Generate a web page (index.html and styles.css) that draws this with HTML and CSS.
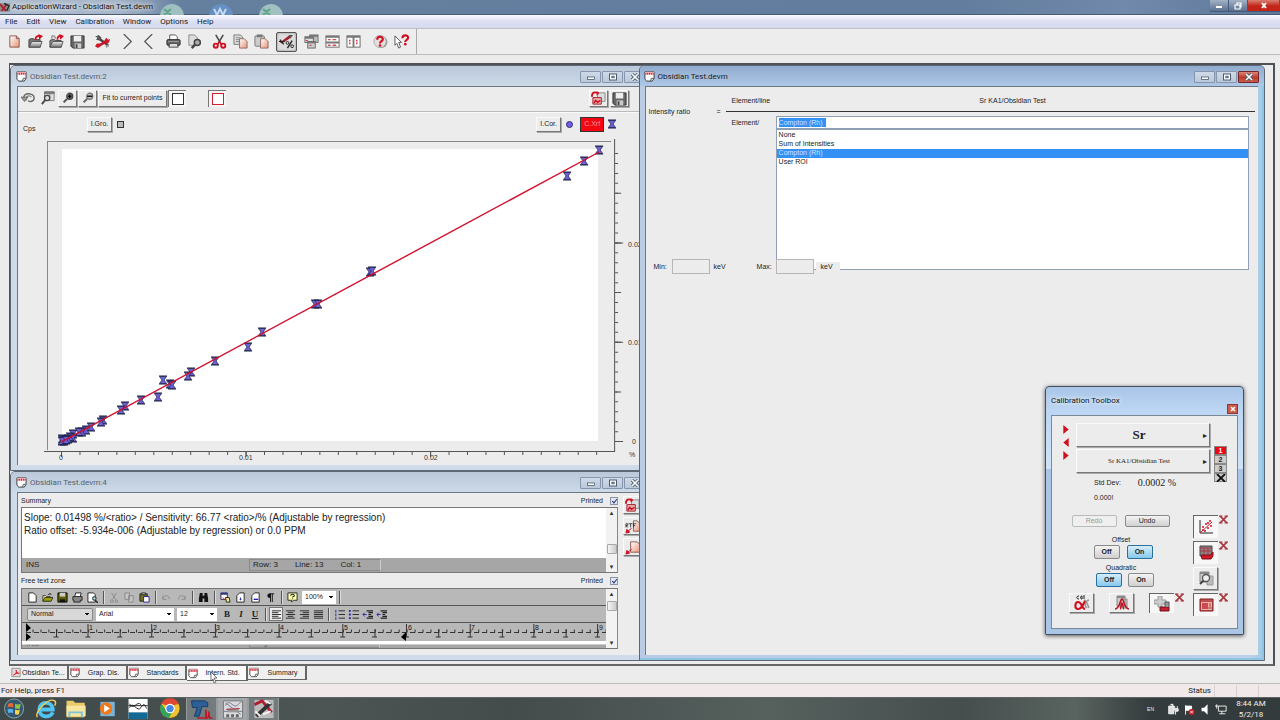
FILE: index.html
```html
<!DOCTYPE html>
<html lang="en">
<head>
<meta charset="utf-8">
<title>ApplicationWizard - Obsidian Test.devm</title>
<link rel="stylesheet" href="styles.css">
</head>
<body>
<svg class="sprite" aria-hidden="true">
  <defs>
    <linearGradient id="paper" x1="0" y1="0" x2="1" y2="1"><stop offset="0" stop-color="#fff"/><stop offset="1" stop-color="#e89478"/></linearGradient>
    <linearGradient id="steel" x1="0" y1="0" x2="0" y2="1"><stop offset="0" stop-color="#eee"/><stop offset="1" stop-color="#777"/></linearGradient>
    <symbol id="i-new" viewBox="0 0 16 16"><path d="M3 2h7l3 3v9H3z" fill="url(#paper)" stroke="#8a5b50"/><path d="M10 2v3h3" fill="none" stroke="#8a5b50"/></symbol>
    <symbol id="i-open" viewBox="0 0 16 16"><path d="M1 14V6l2-1h3l1 1h6v8z" fill="#777" stroke="#444"/><path d="M1 14l3-6h11l-2 6z" fill="url(#steel)" stroke="#555"/><path d="M8 6c0-3 2-4 4-4" fill="none" stroke="#d01020" stroke-width="2"/><path d="M11 0l5 2-4 4z" fill="#d01020"/></symbol>
    <symbol id="i-open2" viewBox="0 0 16 16"><path d="M1 14V7l2-1h3l1 1h6v7z" fill="#888" stroke="#444"/><path d="M3 5V2h3l1 3" fill="#ddd" stroke="#777"/><path d="M1 14l3-6h11l-2 6z" fill="url(#steel)" stroke="#555"/><path d="M9 6c0-2 1-4 3-4" fill="none" stroke="#d01020" stroke-width="2"/><path d="M11 0l5 2-4 4z" fill="#d01020"/></symbol>
    <symbol id="i-save" viewBox="0 0 16 16"><path d="M1 2h14v13H3l-2-2z" fill="#666" stroke="#333"/><path d="M4 2h8v6H4z" fill="#eee"/><path d="M5 10h7v5H5z" fill="#ccc"/><path d="M6 11h2v4H6z" fill="#444"/></symbol>
    <symbol id="i-tools" viewBox="0 0 16 16"><path d="M3 4l11 8" stroke="#444" stroke-width="2.400"/><path d="M0 3l4-2 3 3-2 3-4-1 2-2z" fill="#555"/><path d="M3 13l9-5" stroke="#c01828" stroke-width="2.800"/><path d="M0 13l2-3 3 0 1 3-3 2zM10 7l2-3 2 2 2-1-1 4-3 1z" fill="#d01828"/><path d="M11 12l4-1v2l-3 2z" fill="#999"/></symbol>
    <symbol id="i-next" viewBox="0 0 16 16"><path d="M4 0l8 8-8 8" fill="none" stroke="#555" stroke-width="1.300"/></symbol>
    <symbol id="i-prev" viewBox="0 0 16 16"><path d="M12 0L4 8l8 8" fill="none" stroke="#555" stroke-width="1.300"/></symbol>
    <symbol id="i-print" viewBox="0 0 16 16"><path d="M4 6V1h6l2 2v3" fill="#fff" stroke="#555"/><rect x="1" y="6" width="14" height="6" rx="1" fill="#666" stroke="#222"/><path d="M4 10h8l1 4H3z" fill="#ddd" stroke="#444"/><path d="M2 8h12" stroke="#999"/></symbol>
    <symbol id="i-preview" viewBox="0 0 16 16"><path d="M2 1h6l3 3v8H2z" fill="#ddd" stroke="#888"/><circle cx="11" cy="9" r="3.200" fill="#aaa" stroke="#444" stroke-width="1.600"/><path d="M9 11l-4 4" stroke="#444" stroke-width="2.600"/></symbol>
    <symbol id="i-cut" viewBox="0 0 16 16"><path d="M4 1l6 10M12 1L6 11" stroke="#444" stroke-width="1.600"/><circle cx="4" cy="12.500" r="2.200" fill="none" stroke="#d01020" stroke-width="2"/><circle cx="12" cy="12.500" r="2.200" fill="none" stroke="#d01020" stroke-width="2"/><path d="M6 11l2-3 2 3" fill="none" stroke="#d01020" stroke-width="1.500"/></symbol>
    <symbol id="i-copy" viewBox="0 0 16 16"><path d="M1 1h7l2 2v8H1z" fill="#ddd" stroke="#777"/><path d="M3 4h5M3 6h5M3 8h5" stroke="#888"/><path d="M7 5h5l3 3v7H7z" fill="url(#paper)" stroke="#8a6b60"/></symbol>
    <symbol id="i-paste" viewBox="0 0 16 16"><rect x="1" y="2" width="10" height="11" rx="1" fill="#ccc" stroke="#777"/><rect x="3" y="0.500" width="6" height="3" fill="#777"/><path d="M7 5h5l3 3v7H7z" fill="url(#paper)" stroke="#8a6b60"/></symbol>
    <symbol id="i-percent" viewBox="0 0 16 16"><path d="M1 9l9-7 3 0-2 3-8 5z" fill="#a02030"/><path d="M10 1l5 0-3 4z" fill="#555"/><path d="M0 8h6M1 6l4 5" stroke="#222" stroke-width="1.300"/><path d="M14 7l-5 8" stroke="#222" stroke-width="1.500"/><circle cx="9" cy="9.500" r="1.500" fill="none" stroke="#222"/><circle cx="14" cy="13" r="1.500" fill="none" stroke="#222"/></symbol>
    <symbol id="i-cascade" viewBox="0 0 16 16"><rect x="6" y="1" width="9" height="8" fill="#bbb" stroke="#777"/><rect x="1" y="3" width="9" height="6" fill="#ddd" stroke="#666"/><path d="M1 3h9v2H1zM6 1h9v2H6z" fill="#777"/><rect x="4" y="8" width="8" height="7" fill="#ccc" stroke="#666"/><path d="M4 8h8v2H4z" fill="#777"/><path d="M6 12h2M2 7h2" stroke="#c02030"/></symbol>
    <symbol id="i-tileh" viewBox="0 0 16 16"><rect x="1" y="2" width="14" height="12" fill="#fff" stroke="#666"/><path d="M1 2h14v2H1zM1 8h14v2H1z" fill="#777"/><path d="M3 6h3M8 6h4M3 12h3M8 12h4" stroke="#d05060" stroke-width="1.500"/></symbol>
    <symbol id="i-tilev" viewBox="0 0 16 16"><rect x="1" y="2" width="14" height="12" fill="#fff" stroke="#666"/><path d="M1 2h14v2H1z" fill="#777"/><path d="M8 3v11" stroke="#777" stroke-width="2"/><path d="M4 6v6M11.500 6v6" stroke="#d03040" stroke-width="1.500" stroke-dasharray="2 1"/></symbol>
    <symbol id="i-help" viewBox="0 0 16 16"><circle cx="9" cy="8.500" r="6.500" fill="#999"/><circle cx="7.500" cy="8" r="6.500" fill="#e4dede" stroke="#aaa"/><path d="M4.500 6c0-4 6-4 6-.5C10.500 8 7.500 7.500 7.500 10" fill="none" stroke="#d01020" stroke-width="2.300"/><circle cx="7.500" cy="12.300" r="1.400" fill="#d01020"/></symbol>
    <symbol id="i-whats" viewBox="0 0 16 16"><path d="M1 2l7 7H5l2 5-2 1-2-5-2 2z" fill="#fff" stroke="#555"/><path d="M9 4.500c0-4 6-4 6-.5 0 2.500-3 2-3 4.500" fill="none" stroke="#d01020" stroke-width="2.300"/><circle cx="12" cy="10.800" r="1.400" fill="#d01020"/></symbol>
    <symbol id="i-doc" viewBox="0 0 12 12"><path d="M1 1h10v7l-2 3H3L1 9z" fill="#fff" stroke="#333"/><path d="M1 1h10v3H1z" fill="#f6b6bc"/><path d="M2 2v2M4 2v2M6 2v2M8 2v2M10 2v2" stroke="#d01020"/><path d="M7 11l1-3h3" fill="#ddd" stroke="#555"/></symbol>
    <symbol id="i-pdf" viewBox="0 0 12 12"><path d="M1 1h10v10H1z" fill="#e6dcdc" stroke="#888"/><path d="M3 9c3-1 4-3 3-6 1 3 2 4 4 4-3 0-5 0-7 2z" fill="#d02030" stroke="#d02030"/></symbol>
    <symbol id="i-undoz" viewBox="0 0 16 16"><path d="M3 8c0-7 12-6 12 0 0 4-5 5-7 3" fill="none" stroke="#666" stroke-width="1.600"/><path d="M6 11c-1-5 3-7 6-4" fill="none" stroke="#888" stroke-width="1.400"/><path d="M0 7l4 5 4-5z" fill="#999" stroke="#666"/></symbol>
    <symbol id="i-zoomwin" viewBox="0 0 16 16"><path d="M4 1h11v10H4z" fill="#ddd" stroke="#777"/><path d="M4 1h11v2H4zM10 3v8" fill="#777" stroke="#777"/><circle cx="7" cy="8" r="3" fill="#ddd" stroke="#444" stroke-width="1.400"/><path d="M5 10l-4 5" stroke="#444" stroke-width="2.200"/></symbol>
    <symbol id="i-zoomin" viewBox="0 0 16 16"><circle cx="10" cy="6" r="3.500" fill="#666" stroke="#444" stroke-width="1.300"/><path d="M7 9l-4 4" stroke="#555" stroke-width="2.400"/><path d="M8 6h4M10 4v4" stroke="#000" stroke-width="1.300"/></symbol>
    <symbol id="i-zoomout" viewBox="0 0 16 16"><circle cx="10" cy="6" r="3.500" fill="#bbb" stroke="#777" stroke-width="1.300"/><path d="M7 9l-4 4" stroke="#666" stroke-width="2.400"/><path d="M7 6h6" stroke="#111" stroke-width="1.600"/></symbol>
    <symbol id="i-export" viewBox="0 0 16 16"><path d="M7 2h8v9H7z" fill="#ddd" stroke="#888"/><path d="M2 7h9v7H2z" fill="#eea8a8" stroke="#a02030"/><path d="M3 13l2-3 2 2 3-2" fill="none" stroke="#d01020" stroke-width="1.600"/><path d="M1 6c0-5 3-5 6-4" fill="none" stroke="#d01020" stroke-width="2"/><path d="M6 0l3 2-3 3z" fill="#d01020"/></symbol>
    <symbol id="i-rtf" viewBox="0 0 16 16"><path d="M9 2h4l3 3v8H9z" fill="url(#paper)" stroke="#8a5b50"/><path d="M1 9V5h2v2H1l2 2M4 5h4M6 5v4M9 9V5h3M9 7h2" fill="none" stroke="#222" stroke-width=".8"/><path d="M1 15l1-4 3 3zM3 13l4-3" fill="#d01020" stroke="#d01020"/></symbol>
    <symbol id="i-docout" viewBox="0 0 16 16"><path d="M6 2h7l3 3v8H6z" fill="url(#paper)" stroke="#8a5b50"/><path d="M1 15l1-4 3 3zM3 13l4-3" fill="#d01020" stroke="#d01020"/></symbol>
    <g id="point"><path d="M-3.500-3.500h7L1 0l2.500 3.500h-7L-1 0z" fill="#7060d8" stroke="#242a5c" stroke-width=".8"/><path d="M-4-4h8M-4 4h8" stroke="#1d2348"/></g>
    <symbol id="e-new" viewBox="0 0 12 12"><path d="M2 1h5l3 3v7H2z" fill="#fff" stroke="#222"/></symbol>
    <symbol id="e-open" viewBox="0 0 12 12"><path d="M1 10V4h3l1 1h4v5z" fill="#ffff80" stroke="#333"/><path d="M1 10l2-4h9l-2 4z" fill="#a0a000" stroke="#333"/><path d="M7 3c1-2 3-1 3 0" fill="none" stroke="#000"/></symbol>
    <symbol id="e-save" viewBox="0 0 12 12"><path d="M1 1h10v10H1z" fill="#606000" stroke="#000"/><path d="M3 1h6v4H3z" fill="#ccc"/><path d="M3 8h6v3H3z" fill="#111"/></symbol>
    <symbol id="e-print" viewBox="0 0 12 12"><path d="M3 5l1-4h6L9 5" fill="#fff" stroke="#222"/><path d="M1 5h10v4H9v2H2V9H1z" fill="#888" stroke="#222"/></symbol>
    <symbol id="e-view" viewBox="0 0 12 12"><path d="M1 1h6l2 2v8H1z" fill="#fff" stroke="#222"/><circle cx="8" cy="7" r="2" fill="#9cc" stroke="#222"/><path d="M9 9l3 3" stroke="#222" stroke-width="1.500"/></symbol>
    <symbol id="e-cut" viewBox="0 0 12 12"><path d="M3 1l4 7M8 1L4 8" stroke="#888"/><circle cx="3" cy="10" r="1.500" fill="none" stroke="#888"/><circle cx="8" cy="10" r="1.500" fill="none" stroke="#888"/></symbol>
    <symbol id="e-copy" viewBox="0 0 12 12"><path d="M1 1h5v7H1zM5 4h5v7H5z" fill="#c4c4c4" stroke="#8a8a8a"/></symbol>
    <symbol id="e-paste" viewBox="0 0 12 12"><path d="M1 2h8v8H1z" fill="#707020" stroke="#222"/><path d="M3 1h4v2H3z" fill="#ddd" stroke="#222"/><path d="M5 5h6v6H5z" fill="#fff" stroke="#228"/></symbol>
    <symbol id="e-undo" viewBox="0 0 12 12"><path d="M2 4v4h4M2 7c2-5 8-3 7 1" fill="none" stroke="#888"/></symbol>
    <symbol id="e-redo" viewBox="0 0 12 12"><path d="M10 4v4H6M10 7C8 2 2 4 3 8" fill="none" stroke="#888"/></symbol>
    <symbol id="e-find" viewBox="0 0 12 12"><path d="M2 1h3v3h2V1h3l1 6v4H7V7H5v4H1V7z" fill="#111"/></symbol>
    <symbol id="e-field" viewBox="0 0 12 12"><path d="M1 1h7v7H1z" fill="#fff" stroke="#226"/><path d="M1 1h7v2H1z" fill="#338"/><path d="M6 6h4l1 5H7z" fill="#ee8" stroke="#222"/><path d="M3 6l3 3" stroke="#c22"/></symbol>
    <symbol id="e-page" viewBox="0 0 12 12"><path d="M5 1h5v10H2V4z" fill="#fff" stroke="#222"/><path d="M6 6v3M5 8h2" stroke="#22a"/></symbol>
    <symbol id="e-page2" viewBox="0 0 12 12"><path d="M5 1h5v10H2V4z" fill="#fff" stroke="#222"/><path d="M4 8h5" stroke="#22a" stroke-width="1.500"/></symbol>
    <symbol id="e-para" viewBox="0 0 12 12"><path d="M10 2H5a2 2 0 0 0 0 4h1V2M6 2v9M8 2v9" fill="#111" stroke="#111"/></symbol>
    <symbol id="e-help" viewBox="0 0 12 12"><path d="M1 1h10v8H7l-2 2V9H1z" fill="#ffa" stroke="#222"/><path d="M4 4c0-2 4-2 4 0 0 1-2 1-2 2M6 7v1" fill="none" stroke="#222" stroke-width="1.200"/></symbol>
    <symbol id="e-al" viewBox="0 0 12 12"><path d="M1 2h10M1 4h7M1 6h10M1 8h7M1 10h10" stroke="#222"/></symbol>
    <symbol id="e-ac" viewBox="0 0 12 12"><path d="M1 2h10M3 4h6M1 6h10M3 8h6M1 10h10" stroke="#222"/></symbol>
    <symbol id="e-ar" viewBox="0 0 12 12"><path d="M1 2h10M4 4h7M1 6h10M4 8h7M1 10h10" stroke="#222"/></symbol>
    <symbol id="e-aj" viewBox="0 0 12 12"><path d="M1 2h10M1 4h10M1 6h10M1 8h10M1 10h10" stroke="#222"/></symbol>
    <symbol id="e-num" viewBox="0 0 12 12"><path d="M5 2h7M5 6h7M5 10h7" stroke="#222"/><path d="M2 1v3M2 5v3M2 9v3" stroke="#22a"/></symbol>
    <symbol id="e-bul" viewBox="0 0 12 12"><path d="M5 2h7M5 6h7M5 10h7" stroke="#222"/><path d="M1 2h2M1 6h2M1 10h2" stroke="#22a" stroke-width="2"/></symbol>
    <symbol id="e-ind" viewBox="0 0 12 12"><path d="M5 2h7M7 4h5M7 6h3M7 8h5M5 10h7" stroke="#222" stroke-width="1.200"/><path d="M5 6H1M3 4L1 6l2 2" fill="none" stroke="#22a"/></symbol>
    <symbol id="t-scatter" viewBox="0 0 16 16"><path d="M2 1v13h13" fill="none" stroke="#222"/><path d="M2 14L14 3" stroke="#c02030"/><g fill="#d01020"><circle cx="5" cy="8" r="1"/><circle cx="8" cy="5" r="1"/><circle cx="7" cy="12" r="1"/><circle cx="10" cy="9" r="1"/><circle cx="12" cy="2" r="1"/><circle cx="13" cy="7" r="1"/><circle cx="5" cy="11" r="1"/><circle cx="10" cy="4" r="1"/></g></symbol>
    <symbol id="t-grid" viewBox="0 0 16 16"><path d="M2 1h12v10H2z" fill="#888" stroke="#444"/><path d="M2 3h12M2 6h12M6 3v8M10 3v8" stroke="#b03040"/><path d="M3 10h9l3-3v4l-2 3H4z" fill="#d01828" stroke="#801018"/></symbol>
    <symbol id="t-zoom" viewBox="0 0 16 16"><path d="M2 1h9v10H2z" fill="#ccc" stroke="#888"/><path d="M2 1h9v2H2z" fill="#888"/><path d="M9 5h6v9H9z" fill="#bbb" stroke="#999"/><circle cx="8" cy="7" r="3.500" fill="#eee" stroke="#555" stroke-width="1.300"/><path d="M5.500 9.500L2 13" stroke="#444" stroke-width="2"/></symbol>
    <symbol id="t-panel" viewBox="0 0 16 16"><path d="M2 2h13v12H2z" fill="#c05050" stroke="#802020"/><path d="M3 5h11v8H3z" fill="#eeb0a8"/><path d="M4 6h6v6H4z" fill="#d04850"/><path d="M10 11h4M12 6v4" stroke="#905050"/></symbol>
    <symbol id="t-alpha" viewBox="0 0 16 16"><path d="M15 5c-4 1-5 6-2 8M10 5c3 1 4 6 5 8" fill="none" stroke="#999" stroke-width="1.500"/><path d="M5 1C2 1 2 4 5 4M8 1C6 1 6 4 8 4V1M10 0v4" fill="none" stroke="#222"/><path d="M11 6c-2 3-3 8-7 8-4 0-3-7 0-7 4 0 4 7 7 7" fill="none" stroke="#d01020" stroke-width="2.200"/></symbol>
    <symbol id="t-peak" viewBox="0 0 16 16"><path d="M3 1h8v10H3zM7 4h6v9H7z" fill="#ccc" stroke="#888"/><path d="M3 1h8v2H3z" fill="#888"/><path d="M1 14c5 0 5-10 7-10s2 10 7 10M6 14c1 0 1-6 2-6s1 6 2 6" fill="none" stroke="#c01020" stroke-width="1.500"/></symbol>
    <symbol id="t-calc" viewBox="0 0 16 16"><path d="M4 0h4v4h4v4H8v3H4V8H0V4h4z" fill="#ccc" stroke="#999"/><path d="M6 11h9v4H6z" fill="#c82030" stroke="#701018"/><path d="M11 11V6h4v5" fill="#999" stroke="#555"/></symbol>
    <symbol id="t-x" viewBox="0 0 8 8"><path d="M1 1l6 6M7 1L1 7" stroke="#a83840" stroke-width="1.400"/><path d="M0 1h3M5 1h3M0 7h3M5 7h3" stroke="#a83840"/></symbol>
    <symbol id="w-min" viewBox="0 0 10 8"><rect x="1.500" y="4" width="7" height="2.500" fill="#fff" stroke="#4c5b6d" stroke-width=".8"/></symbol>
    <symbol id="w-max" viewBox="0 0 10 8"><rect x="1.500" y="1" width="7" height="6" fill="#fff" stroke="#4c5b6d"/><rect x="3.800" y="3.200" width="2.400" height="1.600" fill="#9ab" stroke="#4c5b6d" stroke-width=".8"/></symbol>
    <symbol id="w-x" viewBox="0 0 10 8"><path d="M2 1l6 6M8 1L2 7" stroke="#4c5b6d" stroke-width="3.200"/><path d="M2 1l6 6M8 1L2 7" stroke="#fff" stroke-width="1.600"/></symbol>
  </defs>
</svg>

<div class="app">
  <header class="caption">
    <svg class="ghosts" viewBox="0 0 140 15" aria-hidden="true"><circle cx="22" cy="16" r="12" fill="#9fbfc0"/><circle cx="71" cy="16" r="12" fill="#6590c4"/><circle cx="121" cy="16" r="12" fill="#9fc1c2"/><path d="M14 9l7 6M21 9l-7 6M113 9l7 6M120 9l-7 6" stroke="#5fa286" stroke-width="2"/><path d="M64 9l3 6 3-6 3 6 3-6" fill="none" stroke="#c5daf0" stroke-width="2"/></svg>
    <svg class="appicon" viewBox="0 0 12 12"><path d="M0 1h12v10H0z" fill="#888"/><path d="M0 2l7 8M2 10L8 2" stroke="#b01a28" stroke-width="2"/><path d="M5 1l6 3-3 6" fill="none" stroke="#222" stroke-width="1.500"/></svg>
    <span class="caption-text">ApplicationWizard - Obsidian Test.devm</span>
    <span class="caption-buttons">
      <button aria-label="Minimize"><svg viewBox="0 0 10 8"><path d="M2 5h6" stroke="#fff" stroke-width="2"/></svg></button>
      <button aria-label="Restore"><svg viewBox="0 0 10 8"><path d="M2 3h5v4H2zM4 3V1h4v4H7" fill="none" stroke="#fff" stroke-width="1.200"/></svg></button>
      <button class="red" aria-label="Close"><svg viewBox="0 0 10 8"><path d="M3 1l4 5M7 1L3 6" stroke="#fff" stroke-width="2"/></svg></button>
    </span>
  </header>
  <nav class="menubar">
    <button>File</button><button>Edit</button><button>View</button><button>Calibration</button><button>Window</button><button>Options</button><button>Help</button>
  </nav>
  <div class="toolbar">
    <div class="group">
      <button aria-label="New"><svg><use href="#i-new"/></svg></button>
      <button aria-label="Open"><svg><use href="#i-open"/></svg></button>
      <button aria-label="Open copy"><svg><use href="#i-open2"/></svg></button>
      <button aria-label="Save"><svg><use href="#i-save"/></svg></button>
    </div>
    <div class="group"><button aria-label="Tools"><svg><use href="#i-tools"/></svg></button></div>
    <div class="group">
      <button aria-label="Next"><svg><use href="#i-next"/></svg></button>
      <button aria-label="Previous"><svg><use href="#i-prev"/></svg></button>
    </div>
    <div class="group">
      <button aria-label="Print"><svg><use href="#i-print"/></svg></button>
      <button aria-label="Print preview"><svg><use href="#i-preview"/></svg></button>
    </div>
    <div class="group">
      <button aria-label="Cut"><svg><use href="#i-cut"/></svg></button>
      <button aria-label="Copy"><svg><use href="#i-copy"/></svg></button>
      <button aria-label="Paste"><svg><use href="#i-paste"/></svg></button>
    </div>
    <div class="group"><button class="pressed" aria-label="Percent"><svg><use href="#i-percent"/></svg></button></div>
    <div class="group">
      <button aria-label="Cascade"><svg><use href="#i-cascade"/></svg></button>
      <button aria-label="Tile horizontally"><svg><use href="#i-tileh"/></svg></button>
      <button aria-label="Tile vertically"><svg><use href="#i-tilev"/></svg></button>
    </div>
    <div class="group last">
      <button aria-label="Help"><svg><use href="#i-help"/></svg></button>
      <button aria-label="Context help"><svg><use href="#i-whats"/></svg></button>
    </div>
  </div>

  <main class="mdi">
    <section class="win win-graph">
      <header class="titlebar"><svg class="docicon"><use href="#i-doc"/></svg><h2>Obsidian Test.devm:2</h2>
        <button aria-label="Minimize"><svg><use href="#w-min"/></svg></button><button aria-label="Maximize"><svg><use href="#w-max"/></svg></button><button aria-label="Close"><svg><use href="#w-x"/></svg></button></header>
      <div class="win-body">
        <div class="graph-bar">
          <button class="flat" aria-label="Undo zoom"><svg><use href="#i-undoz"/></svg></button>
          <button class="flat" aria-label="Zoom window"><svg><use href="#i-zoomwin"/></svg></button>
          <button class="bevel" aria-label="Zoom in"><svg><use href="#i-zoomin"/></svg></button>
          <button class="bevel" aria-label="Zoom out"><svg><use href="#i-zoomout"/></svg></button>
          <button class="bevel fit">Fit to current points</button>
          <button class="swatch" aria-label="Black frame"><i></i></button>
          <button class="swatch red-frame" aria-label="Red frame"><i></i></button>
          <button class="bevel end" aria-label="Export"><svg><use href="#i-export"/></svg></button>
          <button class="bevel save" aria-label="Save graph"><svg><use href="#i-save"/></svg></button>
        </div>
        <div class="legend">
          <span class="cps">Cps</span>
          <button class="bevel">I.Gro.</button><i class="mark-square"></i>
          <button class="bevel cor">I.Cor.</button><i class="mark-dot"></i>
          <button class="bevel xrf">C.Xrf</button><svg class="mark-hour" viewBox="-5 -5 10 10"><use href="#point"/></svg>
        </div>
        <svg class="plot" viewBox="18 137 629 326" role="img" aria-label="Calibration curve">
          <path d="M62 149H598V441H62z" fill="#fff"/>
          <path d="M47.500 450V141.500H611" fill="none" stroke="#888"/>
          <path d="M44 451.500H614.500V139" fill="none" stroke="#555"/>
          <path d="M61 453.500H599" stroke="#555" stroke-width="3" stroke-dasharray="1 17.450"/>
          <path d="M61 454.500H440" stroke="#555" stroke-width="5" stroke-dasharray="1 183.500"/>
          <path d="M616.500 442V150" stroke="#555" stroke-width="3" stroke-dasharray="1 8.930"/>
          <path d="M618 442V190" stroke="#555" stroke-width="6" stroke-dasharray="1 48.650"/>
          <path d="M619 442V230" stroke="#555" stroke-width="8" stroke-dasharray="1 98.300"/>
          <g><text x="59" y="460">0</text><text x="239" y="460">0.01</text><text x="424" y="460">0.02</text><text x="628" y="247">0.02</text><text x="628" y="345">0.01</text><text x="632" y="444">0</text><text x="629" y="457">%</text></g>
          <g>
            <use href="#point" x="599" y="150"/><use href="#point" x="584" y="161"/><use href="#point" x="567" y="176"/><use href="#point" x="370" y="272"/><use href="#point" x="372" y="271"/><use href="#point" x="315" y="304"/><use href="#point" x="318" y="304"/><use href="#point" x="262" y="332"/><use href="#point" x="248" y="347"/><use href="#point" x="215" y="361"/><use href="#point" x="191" y="372"/><use href="#point" x="188" y="376"/><use href="#point" x="163" y="380"/><use href="#point" x="170" y="384"/><use href="#point" x="172" y="385"/><use href="#point" x="158" y="397"/><use href="#point" x="141" y="400"/><use href="#point" x="125" y="406"/><use href="#point" x="121" y="410"/><use href="#point" x="103" y="420"/><use href="#point" x="101" y="422"/><use href="#point" x="91" y="427"/><use href="#point" x="86" y="430"/><use href="#point" x="82" y="432"/><use href="#point" x="79" y="432"/><use href="#point" x="73" y="434"/><use href="#point" x="73" y="438"/><use href="#point" x="70" y="437"/><use href="#point" x="68" y="439"/><use href="#point" x="62" y="439"/><use href="#point" x="64" y="441"/><use href="#point" x="62" y="441"/><use href="#point" x="66" y="440"/>
          </g>
          <path d="M61 442L599 152" stroke="#d0102c" stroke-width="1.400"/>
        </svg>
      </div>
    </section>

    <section class="win win-text">
      <header class="titlebar"><svg class="docicon"><use href="#i-doc"/></svg><h2>Obsidian Test.devm:4</h2>
        <button aria-label="Minimize"><svg><use href="#w-min"/></svg></button><button aria-label="Maximize"><svg><use href="#w-max"/></svg></button><button aria-label="Close"><svg><use href="#w-x"/></svg></button></header>
      <div class="win-body text-body">
        <div class="zones">
          <div class="zone-head"><span>Summary</span><label>Printed <input type="checkbox" checked></label></div>
          <div class="zone summary">
            <div class="zone-main">
              <p>Slope: 0.01498 %/&lt;ratio&gt; / Sensitivity: 66.77 &lt;ratio&gt;/% (Adjustable by regression)<br>Ratio offset: -5.934e-006 (Adjustable by regression) or 0.0 PPM</p>
              <div class="zone-status"><span class="ins">INS</span><span class="pos"><span>Row: 3</span><span>Line: 13</span><span>Col: 1</span></span></div>
            </div>
            <div class="scroll low"><b>▴</b><i></i><b>▾</b></div>
          </div>
          <div class="zone-head second"><span>Free text zone</span><label>Printed <input type="checkbox" checked></label></div>
          <div class="zone editor">
            <div class="zone-main">
              <div class="ed-row">
                <button aria-label="New"><svg><use href="#e-new"/></svg></button><button aria-label="Open"><svg><use href="#e-open"/></svg></button><button aria-label="Save"><svg><use href="#e-save"/></svg></button><button aria-label="Print"><svg><use href="#e-print"/></svg></button><button aria-label="Preview"><svg><use href="#e-view"/></svg></button><hr>
                <button aria-label="Cut"><svg><use href="#e-cut"/></svg></button><button aria-label="Copy"><svg><use href="#e-copy"/></svg></button><button aria-label="Paste"><svg><use href="#e-paste"/></svg></button><hr>
                <button aria-label="Undo"><svg><use href="#e-undo"/></svg></button><button aria-label="Redo"><svg><use href="#e-redo"/></svg></button><hr>
                <button aria-label="Find"><svg><use href="#e-find"/></svg></button><hr>
                <button aria-label="Field"><svg><use href="#e-field"/></svg></button><button aria-label="Header"><svg><use href="#e-page"/></svg></button><button aria-label="Footer"><svg><use href="#e-page2"/></svg></button><button aria-label="Marks"><svg><use href="#e-para"/></svg></button><hr>
                <button aria-label="Help"><svg><use href="#e-help"/></svg></button>
                <select class="zoomsel" aria-label="Zoom"><option>100%</option></select><hr>
              </div>
              <div class="ed-row">
                <select class="stylesel" aria-label="Style"><option>Normal</option></select><select class="fontsel" aria-label="Font"><option>Arial</option></select><select class="sizesel" aria-label="Size"><option>12</option></select>
                <button class="b">B</button><button class="b it">I</button><button class="b un">U</button><hr>
                <button class="on" aria-label="Left"><svg><use href="#e-al"/></svg></button><button aria-label="Centre"><svg><use href="#e-ac"/></svg></button><button aria-label="Right"><svg><use href="#e-ar"/></svg></button><button aria-label="Justify"><svg><use href="#e-aj"/></svg></button><hr>
                <button aria-label="Numbering"><svg><use href="#e-num"/></svg></button><button aria-label="Bullets"><svg><use href="#e-bul"/></svg></button><button aria-label="Outdent"><svg><use href="#e-ind"/></svg></button><button aria-label="Indent"><svg><use href="#e-ind"/></svg></button>
              </div>
              <svg class="ruler" viewBox="0 0 584 18" preserveAspectRatio="xMinYMin slice" aria-hidden="true">
                <path d="M4 9.500H584" stroke="#333" stroke-dasharray="5 3"/>
                <path d="M10.500 8H584" stroke="#333" stroke-width="3" stroke-dasharray="1 6.960"/>
                <path d="M34 10H584" stroke="#333" stroke-width="8" stroke-dasharray="1 62.700"/>
                <path d="M65.500 7.500H584" stroke="#333" stroke-width="13" stroke-dasharray="1 62.700"/>
                <path d="M31.500 14H584" stroke="#333" stroke-width="1" stroke-dasharray="5 26.850"/>
                <path d="M4 0l5 5-5 4zM4 10l5 4-5 4zM379 14l5-5v9z" fill="#000"/>
                <g><text x="67" y="7">1</text><text x="131" y="7">2</text><text x="194" y="7">3</text><text x="258" y="7">4</text><text x="322" y="7">5</text><text x="386" y="7">6</text><text x="449" y="7">7</text><text x="513" y="7">8</text><text x="577" y="7">9</text></g>
              </svg>
              <div class="ed-page"></div>
              <div class="ed-status"><span>INS</span><span class="pos"><span>Page: 1</span><span>Line: 1</span><span>Col: 1</span></span></div>
            </div>
            <div class="scroll high"><b>▴</b><i></i><b>▾</b></div>
          </div>
        </div>
        <div class="side-buttons">
          <button class="bevel" aria-label="Export"><svg><use href="#i-export"/></svg></button>
          <button class="bevel" aria-label="Export RTF"><svg><use href="#i-rtf"/></svg></button>
          <button class="bevel" aria-label="Export document"><svg><use href="#i-docout"/></svg></button>
        </div>
      </div>
    </section>

    <section class="win win-std active">
      <header class="titlebar"><svg class="docicon"><use href="#i-doc"/></svg><h2>Obsidian Test.devm</h2>
        <button aria-label="Minimize"><svg><use href="#w-min"/></svg></button><button aria-label="Maximize"><svg><use href="#w-max"/></svg></button><button class="red" aria-label="Close"><svg><use href="#w-x"/></svg></button></header>
      <div class="win-body">
        <div class="ratio">
          <span class="lhs">Intensity ratio</span><span>=</span>
          <div class="fraction">
            <div class="numer"><span>Element/line</span><span class="line-name">Sr KA1/Obsidian Test</span></div>
            <div class="denom">
              <label for="norm">Element/</label>
              <div class="combo">
                <div class="combo-edit"><input id="norm" value="Compton (Rh)"></div>
                <select size="12" aria-label="Element"><option>None</option><option>Sum of Intensities</option><option selected>Compton (Rh)</option><option>User ROI</option></select>
              </div>
            </div>
          </div>
        </div>
        <div class="range">
          <label for="kmin">Min:</label><input id="kmin" disabled><span>keV</span>
          <label class="maxl" for="kmax">Max:</label><input id="kmax" disabled><span class="kev2">keV</span>
        </div>
      </div>
    </section>
  </main>

  <nav class="tabs">
    <button><svg><use href="#i-pdf"/></svg>Obsidian Te...</button>
    <button class="pad"><svg><use href="#i-doc"/></svg><span>Grap. Dis.</span></button>
    <button class="pad"><svg><use href="#i-doc"/></svg><span>Standards</span></button>
    <button class="pad current"><svg><use href="#i-doc"/></svg><span>Intern. Std.</span></button>
    <button class="pad"><svg><use href="#i-doc"/></svg><span>Summary</span></button>
  </nav>
  <footer class="statusbar"><span>For Help, press F1</span><span class="cells"><span>Status</span><i></i><i></i><i></i></span></footer>
</div>

<footer class="taskbar">
  <button aria-label="Start"><svg viewBox="0 0 30 23"><circle cx="13" cy="11" r="10" fill="#34566f" stroke="#8aa"/><path d="M7 6c2-1 4-1 5 0v4c-2-1-4-1-6 0z" fill="#e66a30"/><path d="M14 6c2 1 4 1 6 0l-1 5c-2 1-3 0-5 0z" fill="#8cc24a"/><path d="M6 12c2-1 4-1 6 0v4c-2-1-3-1-5 0z" fill="#5ab0ea"/><path d="M14 12c2 1 3 1 5 0l-1 5c-2 1-3 0-4 0z" fill="#f5d44a"/></svg></button>
  <button aria-label="Internet Explorer"><svg viewBox="0 0 30 23"><path d="M21 15c-2 6-14 6-14-3S20 3 21 11v1H9" fill="none" stroke="#4fc3f2" stroke-width="4"/><path d="M5 20C1 15 17-1 23 3c2 2 0 5 0 5" fill="none" stroke="#f0cf54" stroke-width="1.500"/></svg></button>
  <button aria-label="Explorer"><svg viewBox="0 0 30 23"><path d="M3 3h7l2 2h10v15H3z" fill="#e9ca68"/><path d="M3 8h20v11H3z" fill="#f8e6a0"/><path d="M6 20v-5h13v5" fill="none" stroke="#7cc4dc" stroke-width="2"/></svg></button>
  <button aria-label="Media player"><svg viewBox="0 0 30 23"><rect x="6" y="4" width="15" height="15" fill="#79b4dd"/><circle cx="12" cy="11" r="6.500" fill="#f07818"/><path d="M10 7l6 4-6 4z" fill="#fff"/></svg></button>
  <button aria-label="Spectrum tool"><svg viewBox="0 0 30 23"><path d="M3 1h20v21H3z" fill="#fff"/><path d="M3 15h20v7H3z" fill="#126a94"/><path d="M3 8h20M4 10c4-8 8 6 12 0s4-2 6 1M4 6c4 8 8-4 12 1" fill="none" stroke="#222"/></svg></button>
  <button aria-label="Chrome"><svg viewBox="0 0 30 23"><circle cx="14" cy="11" r="10" fill="#efc22e"/><path d="M5 6a10 10 0 0 1 18 0l-9 3z" fill="#df4634"/><path d="M5 6a10 10 0 0 0 8 15l4-8-7 0z" fill="#36a457"/><circle cx="14" cy="11" r="5" fill="#fff"/><circle cx="14" cy="11" r="3.800" fill="#4688e6"/></svg></button>
  <button class="lit" aria-label="XRF gun"><svg viewBox="0 0 30 23"><path d="M4 3h14l3 2v4h-6l-3 10H7l3-9H5z" fill="#2c5f96" stroke="#173c66"/><path d="M10 21h9V12l1 9 2-1V14l1 7h3" fill="none" stroke="#c01828" stroke-width="1.500"/></svg></button>
  <button class="lit bright" aria-label="Viewer"><svg viewBox="0 0 30 23"><path d="M5 3h20v18H5z" fill="#d8dade" stroke="#777"/><path d="M7 8c3-6 6-2 9 0s5-3 8-4M7 5l16 12M5 14h20" fill="none" stroke="#778"/><path d="M9 11h12v4H9z" fill="#999"/><path d="M8 17h3v3H8zM13 17h3v3h-3zM18 17h3v3h-3z" fill="#666"/><path d="M8 12l14-1" stroke="#b02838"/></svg></button>
  <button class="lit" aria-label="ApplicationWizard"><svg viewBox="0 0 30 23"><path d="M5 2h20v19H5z" fill="#bbb"/><path d="M5 7l8-4 10 12" fill="none" stroke="#b02030" stroke-width="3"/><path d="M7 19L22 5" stroke="#333" stroke-width="4"/><path d="M16 3l6 3M6 14l5 5M14 17l8-3" stroke="#f4f4f4" stroke-width="2"/></svg></button>
  <div class="tray">
    <span class="lang">EN</span>
    <svg viewBox="0 0 14 14"><path d="M2 3h6v9H2zM4 1h3v2M9 3v3M12 3v3M8 6h5v3H9M10 9v4" fill="#ddd" stroke="#fff"/></svg>
    <svg viewBox="0 0 14 14"><path d="M3 2v11M3 3h7v5H3z" fill="#fff" stroke="#fff"/><circle cx="10" cy="10" r="3.500" fill="#d01828"/><path d="M8.500 8.500l3 3M11.500 8.500l-3 3" stroke="#fff"/></svg>
    <svg viewBox="0 0 14 14"><path d="M3 5h3l4-4v12L6 9H3z" fill="#fff"/></svg>
    <svg viewBox="0 0 14 14"><path d="M4 3h9v6H4zM8 9v3M5 12h7M2 1v5M0 3h4" fill="none" stroke="#fff"/></svg>
    <span class="clock">8:44 AM<br>5/2/18</span>
  </div>
</footer>

<aside class="toolbox">
  <header><h2>Calibration Toolbox</h2><button aria-label="Close"><svg viewBox="0 0 10 8"><path d="M3 2l4 4M7 2L3 6" stroke="#fff" stroke-width="1.500"/></svg></button></header>
  <div class="tb-body">
    <div class="tb-top">
      <div class="arrows"><button aria-label="Next element"><svg viewBox="0 0 6 10"><path d="M0 0l6 5-6 5z"/></svg></button><button aria-label="Previous element"><svg viewBox="0 0 6 10"><path d="M6 0L0 5l6 5z"/></svg></button><button aria-label="Next line"><svg viewBox="0 0 6 10"><path d="M0 0l6 5-6 5z"/></svg></button></div>
      <div class="pickers"><button class="bevel elem">Sr<i>▸</i></button><button class="bevel line">Sr KA1/Obsidian Test<i>▸</i></button></div>
      <div class="minis"><button class="sel">1</button><button>2</button><button>3</button><button aria-label="Clear"><svg viewBox="0 0 10 8"><path d="M1 0l8 8M9 0L1 8" stroke="#111" stroke-width="1.800"/></svg></button></div>
    </div>
    <div class="tb-bottom">
      <div class="tb-left">
        <div class="dev"><span>Std Dev:</span><span class="num">0.0002 %</span></div>
        <div class="dev2">0.000!</div>
        <div class="pair wide"><button disabled>Redo</button><button>Undo</button></div>
        <p>Offset</p>
        <div class="pair"><button>Off</button><button class="lit">On</button></div>
        <p>Quadratic</p>
        <div class="pair quad"><button class="lit">Off</button><button>On</button></div>
        <div class="icons"><button class="bevel" aria-label="Alpha"><svg><use href="#t-alpha"/></svg></button><button class="bevel" aria-label="Peak"><svg><use href="#t-peak"/></svg></button><button class="sunk" aria-label="Calculate"><svg><use href="#t-calc"/></svg></button><svg class="x"><use href="#t-x"/></svg></div>
      </div>
      <div class="tb-right">
        <div><button class="sunk" aria-label="Graph"><svg><use href="#t-scatter"/></svg></button><svg class="x"><use href="#t-x"/></svg></div>
        <div><button class="sunk" aria-label="Table"><svg><use href="#t-grid"/></svg></button><svg class="x"><use href="#t-x"/></svg></div>
        <div><button class="bevel" aria-label="Search"><svg><use href="#t-zoom"/></svg></button></div>
        <div><button class="sunk" aria-label="Panel"><svg><use href="#t-panel"/></svg></button><svg class="x"><use href="#t-x"/></svg></div>
      </div>
    </div>
  </div>
</aside>
<svg class="pointer" viewBox="0 0 8 11" aria-hidden="true"><path d="M1 0l6 6H4l2 4-2 1-1-4-2 2z" fill="#fff" stroke="#444" stroke-width=".7"/></svg>
</body>
</html>
```

FILE: styles.css
```css
* { box-sizing: border-box; }
body { margin: 0; height: 100vh; display: flex; flex-direction: column; overflow: hidden; background: #ececec; color: #222; font: 7px/10px "Liberation Sans", Arial, sans-serif; }
button, input, select { font: inherit; color: inherit; margin: 0; padding: 0; border: 0; border-radius: 0; background: none; }
button { display: flex; align-items: center; justify-content: center; }
h2, p { margin: 0; font: inherit; }
svg { display: block; flex: none; }
.sprite { position: absolute; width: 0; height: 0; }

.app { flex: 1; display: flex; flex-direction: column; min-height: 0; }
.caption { position: relative; flex: none; height: 15px; display: flex; align-items: center; background: linear-gradient(90deg, #aebccd, #a3b3c7 120px, #657f9f 180px, #627d9d 75%, #7189aa 88%, #5d7899); border-bottom: 1px solid #465b75; font: 8px/12px Roboto, sans-serif; color: #111; }
.appicon { width: 10px; height: 11px; }
.caption-text { position: relative; margin-left: 2px; text-shadow: 0 0 4px #fff, 0 0 6px #fff; }
.ghosts { position: absolute; left: 150px; top: 0; width: 140px; height: 15px; }
.caption-buttons { display: flex; margin-left: auto; align-self: flex-start; }
.caption-buttons button { width: 19px; height: 12px; background: linear-gradient(#a3b1c4, #5a7190); border: solid #44597a; border-width: 0 1px 1px 0; }
.caption-buttons .red { width: 32px; background: linear-gradient(#d98172, #c32418 55%); }
.caption-buttons svg { width: 10px; height: 8px; }
.menubar { flex: none; height: 14px; display: flex; gap: 9px; padding-left: 5px; background: linear-gradient(#fafaff, #dcdff2 50%, #d6daee); border-bottom: 1px solid #bfbfc8; font: 8px/12px Roboto, sans-serif; }
.toolbar { flex: none; height: 26px; display: flex; gap: 4px; padding-left: 4px; border-bottom: 1px solid #bcbcbc; background: #ededed; }
.toolbar .group { display: flex; align-items: center; }
.toolbar .last { margin-left: 2px; padding-right: 4px; border-right: 1px solid #aaa; }
.toolbar button { width: 21px; height: 20px; }
.toolbar svg { width: 15px; height: 15px; }
.toolbar .pressed { border: 1px solid #555; border-radius: 2px; background: #ddd; box-shadow: inset 0 0 2px #777; }

.mdi { position: relative; flex: 1; min-height: 0; margin: 8px 5px 0 9px; border: solid #4e5257; border-width: 2px 2px 0 1px; border-bottom: 2px solid #666; overflow: hidden; }
.win { position: absolute; display: flex; flex-direction: column; background: #cfdbe9; border: 1px solid #5d6875; border-radius: 5px 5px 0 0; padding: 0 6px 5px; }
.win-graph { left: 0; top: 0; width: 51%; height: 406px; }
.win-text { left: 0; top: 406px; width: 51%; bottom: 3px; }
.win-std { left: calc(50% - 3px); right: 8px; top: 0; bottom: 3px; background: linear-gradient(90deg, #b9cce4, #bcd0e7 98%, #9bcbe9); box-shadow: inset -2px -2px #8fc5e2; padding: 0 6px 5px 5px; }
.titlebar { flex: none; display: flex; align-items: center; height: 20px; margin: 0 -6px; padding: 1px 8px 0 5px; border-radius: 4px 4px 0 0; background: linear-gradient(#bac8da, #ccd9e8); font: 8px/12px Roboto, sans-serif; color: #56616e; }
.active .titlebar { background: linear-gradient(#91abce, #adc8e7); color: #222; margin: 0 -6px 0 -5px; padding: 1px 5px 0 4px; }
.titlebar h2 { flex: 1; margin-left: 3px; }
.docicon { width: 11px; height: 11px; }
.titlebar button { width: 21px; height: 12px; margin-left: 1px; border: 1px solid #8695ab; border-radius: 1px; background: linear-gradient(#cfdae8, #b9c8da); }
.titlebar button.red { border-color: #74272a; background: linear-gradient(#dc8478, #c13a2a 55%, #cf5a46); }
.titlebar button svg { width: 10px; height: 8px; }
.win-body { flex: 1; min-height: 0; background: #ececec; border: solid #6f7780; border-width: 1px 0 0 1px; overflow: hidden; }

.bevel { border: 1px solid; border-color: #fafafa #777 #777 #fafafa; background: #ececec; box-shadow: 1px 1px #aaa; }
.graph-bar { display: flex; align-items: center; height: 25px; padding: 0 18px 2px 0; border-bottom: 1px solid #bbb; box-shadow: 0 1px #fafafa; }
.graph-bar button { height: 17px; }
.graph-bar svg { width: 14px; height: 14px; }
.flat { width: 20px; }
.graph-bar .bevel { width: 19px; margin-right: 1px; }
.graph-bar .fit { width: 69px; margin-right: 1px; }
.swatch { width: 18px; border: solid #777; border-width: 1px 0 0 1px; background: #f5f5f5; }
.swatch i { width: 12px; height: 12px; border: 1px solid #333; background: #fff; }
.red-frame { margin-left: 22px; }
.red-frame i { border-color: #d02030; }
.graph-bar .end { margin-left: auto; margin-right: 2px; }
.graph-bar .save { margin-right: 0; }
.graph-bar .save svg, .graph-bar .end svg { width: 15px; height: 15px; }
.legend { display: flex; align-items: center; height: 25px; padding: 0 30px 1px 5px; }
.cps { width: 64px; padding-top: 9px; }
.legend button { width: 25px; height: 15px; }
.legend .cor { margin-left: auto; }
.mark-square { width: 7px; height: 7px; margin-left: 5px; border: 1px solid #333; background: #bbb; }
.mark-dot { width: 7px; height: 7px; margin: 0 7px 0 5px; border: 1px solid #332a80; border-radius: 50%; background: #7060e0; }
.legend .xrf { width: 24px; background: #f40612; color: #ff9a9a; border-color: #333; box-shadow: none; }
.mark-hour { width: 10px; height: 10px; margin-left: 3px; }
.plot { width: 100%; height: auto; }
.plot text { font: 7px "Liberation Sans", sans-serif; fill: #333; }

.text-body { display: flex; gap: 5px; padding: 1px 0 6px 3px; }
.zones { width: 597px; display: flex; flex-direction: column; }
.zone-head { flex: none; height: 13px; display: flex; justify-content: space-between; align-items: center; }
.zone-head label { display: flex; align-items: center; gap: 7px; }
.zone-head input { appearance: none; width: 8px; height: 8px; border: 1px solid #8a96a8; background: #dfe5f2; }
.zone-head input:checked::after { content: ""; display: block; width: 2px; height: 4px; margin: 0 0 0 2px; border: solid #27386e; border-width: 0 1px 1px 0; transform: rotate(40deg); }
.zone-head.second { height: 15px; }
.zone { display: flex; border: solid #777; border-width: 1px 0 1px 1px; }
.summary { flex: none; height: 66px; background: #fff; }
.zone-main { flex: 1; min-width: 0; display: flex; flex-direction: column; }
.summary p { flex: 1; padding: 3px 2px; font: 10px/13px "Liberation Sans", Arial, sans-serif; }
.zone-status { flex: none; height: 14px; display: flex; align-items: center; background: #a6a6a6; font-size: 8px; padding-left: 4px; }
.ins { width: 223px; }
.pos { display: flex; gap: 17px; padding: 0 19px 0 3px; border: 1px solid #8b8b8b; border-right-color: #ccc; }
.scroll { flex: none; width: 12px; display: flex; flex-direction: column; align-items: center; background: #f2f2f2; border-right: 1px solid #888; }
.scroll b { font: 7px/10px "DejaVu Sans", sans-serif; color: #333; }
.scroll i { width: 10px; height: 10px; border: 1px solid #aaa; border-radius: 1px; background: linear-gradient(90deg, #f5f5f5, #ccc); }
.low i { margin: auto 0 8px; }
.high i { margin: 2px 0 auto; }
.editor { flex: 1; min-height: 0; background: #b8b8b8; }
.ed-row { flex: none; height: 17px; display: flex; align-items: center; padding-left: 3px; border-bottom: 1px solid #555; }
.ed-row button { flex: none; width: 15px; height: 14px; }
.ed-row svg { width: 11px; height: 11px; }
.ed-row hr { width: 1px; height: 13px; margin: 0 3px; border: 0; background: #555; box-shadow: 1px 0 #ddd; }
.ed-row select { appearance: none; height: 13px; padding-left: 3px; background: conic-gradient(from -45deg at 50% 100%, #111 0 90deg, transparent 0) right 2px center / 6px 3px no-repeat, #fff; }
.ed-row .zoomsel { width: 34px; margin-left: 2px; }
.ed-row .stylesel { width: 66px; margin-left: 2px; background-color: #d8d8d8; border: 1px solid #888; border-radius: 2px; }
.ed-row .fontsel { width: 78px; margin: 0 3px; }
.ed-row .sizesel { width: 40px; margin-right: 3px; }
.ed-row .b { width: 14px; font: bold 9px "Liberation Serif", serif; }
.ed-row .it { font-style: italic; }
.ed-row .un { text-decoration: underline; }
.ed-row .on { background: #eee; border: 1px solid #777; }
.ed-row .b ~ button:not(.b) { width: 14px; }
.ruler { width: 100%; height: 18px; }
.ruler text { font: 7px "Liberation Sans", sans-serif; fill: #111; }
.ed-page { flex: none; height: 3px; background: #fff; }
.ed-status { flex: 1; min-height: 0; display: flex; align-items: flex-end; overflow: hidden; background: #a6a6a6; padding-left: 4px; line-height: 8px; font-size: 8px; color: #666; gap: 210px; border-top: 1px solid #ccc; }
.side-buttons { display: flex; flex-direction: column; gap: 3px; padding-top: 2px; }
.side-buttons button { width: 18px; height: 18px; }
.side-buttons svg { width: 15px; height: 15px; }

.ratio { display: flex; align-items: flex-start; padding: 9px 3px 0 3px; }
.ratio > span { padding-top: 11px; }
.ratio .lhs { width: 68px; }
.fraction { flex: 1; margin-left: 5px; }
.numer { display: flex; height: 16px; padding-left: 6px; border-bottom: 1px solid #333; }
.line-name { flex: 1; text-align: center; }
.denom { display: flex; padding: 4px 6px 0 6px; }
.denom label { width: 44px; padding-top: 2px; }
.combo { flex: 1; }
.combo-edit { height: 13px; background: #fff; border: 1px solid #8fa0b6; padding: 1px 2px; display: flex; }
.combo-edit input { width: 47px; height: 9px; background: #3390f5; color: #cfe4ff; line-height: 9px; }
.combo select { display: block; width: 100%; height: 141px; overflow: hidden; appearance: none; border: 1px solid #8fa0b6; background: #fff; padding-top: 1px; outline: 0; }
.combo option { height: 9px; min-height: 0; padding: 0 2px; line-height: 9px; }
.combo option:checked { background: #3390f5 linear-gradient(#3390f5, #3390f5); color: #cfe4ff; }
.range { position: relative; display: flex; align-items: center; width: max-content; margin-top: -11px; padding-left: 8px; }
.range label { width: 18px; }
.range input { width: 38px; height: 15px; margin-right: 4px; border: 1px solid #b5b5b5; background: #ececec; }
.range .maxl { width: 19px; margin-left: 31px; }
.range .kev2 { padding: 0 7px 0 5px; margin-left: -2px; background: #ececec; }

.tabs { flex: none; height: 17px; display: flex; margin: 0 5px; padding: 0 5px; align-items: flex-start; }
.tabs button { width: 59px; height: 14px; gap: 1px; justify-content: flex-start; border: solid #666; border-width: 0 2px 1px 0; background: #efefef; white-space: nowrap; font-size: 7px; }
.tabs svg { width: 10px; height: 11px; margin-left: 1px; }
.tabs .pad span { flex: 1; text-align: center; }
.tabs .current { width: 61px; height: 15px; background: #fafafa; }
.statusbar { flex: none; height: 14px; display: flex; justify-content: space-between; align-items: center; padding-left: 1px; background: #f1e9e9; border-top: 1px solid #bbb; font: 8px/12px Roboto, sans-serif; }
.cells { display: flex; }
.cells span { margin-right: 3px; }
.cells i { width: 22px; height: 12px; border-left: 1px solid #d8cfcf; }

.taskbar { flex: none; height: 23px; display: flex; background: linear-gradient(90deg, #3f4848, #4c5554 25%, #434c4b 40%, #56605d 60%, #454e4d 75%, #59635f 84%, #333b3c 90%); border-top: 1px solid #5c6564; }
.taskbar button { width: 31px; height: 22px; }
.taskbar button svg { width: 30px; height: 22px; }
.taskbar .lit { background: #747b7d; border: solid #969c9d; border-width: 0 1px; }
.taskbar .bright { background: #a3a7aa; }
.tray { margin-left: auto; display: flex; align-items: center; gap: 4px; padding-right: 9px; color: #f0f0f0; }
.tray svg { width: 12px; height: 13px; }
.lang { font-size: 5px; margin-right: 9px; }
.clock { width: 40px; text-align: center; font: 8px/11px Roboto, sans-serif; }

.toolbox { position: absolute; right: 36px; top: 386px; width: 199px; display: flex; flex-direction: column; padding: 0 5px 5px; border: 1px solid #46505c; border-radius: 4px 4px 1px 1px; background: linear-gradient(#a9c5e8, #bcd6f4 24px, #cfe3f7 80px, #cfe3f7 33%, #abc5e6 33%); box-shadow: 0 1px 4px #555; }
.toolbox > header { height: 28px; display: flex; justify-content: space-between; font: 8px/12px Roboto, sans-serif; color: #111; }
.toolbox h2 { padding-top: 8px; text-shadow: 0 0 4px #fff, 0 0 6px #fff; }
.toolbox header button { width: 11px; height: 10px; margin-bottom: 1px; align-self: flex-end; border: 1px solid #8a3a30; background: #ce5b48; }
.toolbox header svg { width: 10px; height: 8px; }
.tb-body { height: 214px; background: #ececec; border: 1px solid #7c8896; padding: 7px 0 0 10px; }
.tb-top { display: flex; }
.arrows { width: 14px; padding: 1px 0 0 1px; display: flex; flex-direction: column; gap: 3px; }
.arrows button { width: 6px; height: 10px; }
.arrows svg { width: 6px; height: 9px; fill: #d01020; }
.pickers { display: flex; flex-direction: column; gap: 2px; width: 134px; }
.pickers button { position: relative; height: 24px; padding-right: 8px; font-family: "Liberation Serif", serif; }
.pickers .elem { font-weight: bold; font-size: 13px; }
.pickers i { position: absolute; right: 2px; font: 8px "DejaVu Sans", sans-serif; }
.minis { margin: 23px 0 0 4px; }
.minis button { width: 13px; height: 9px; border: 1px solid #888; background: #ccc; font-weight: bold; }
.minis .sel { background: #ee0612; color: #fff; }
.minis svg { width: 10px; height: 8px; }
.tb-bottom { display: flex; }
.tb-left { width: 131px; padding-left: 7px; }
.tb-left p { text-align: center; width: 104px; line-height: 10px; }
.dev { display: flex; gap: 17px; align-items: center; padding-left: 25px; height: 12px; margin-top: -5px; }
.num { font: 10px/12px "Liberation Serif", serif; white-space: nowrap; }
.dev2 { padding: 4px 0 12px 25px; }
.pair { display: flex; justify-content: center; gap: 7px; width: 108px; margin-bottom: 4px; }
.pair button { width: 26px; height: 14px; border: 1px solid #8a8a8a; border-radius: 2px; background: linear-gradient(#f3f3f3, #d0d0d0); font-weight: bold; }
.pair.wide { margin-bottom: 8px; width: 103px; gap: 8px; }
.pair.wide button { width: 45px; height: 12px; font-weight: normal; flex: none; }
.pair.quad { width: 112px; gap: 6px; }
.pair button:disabled { color: #999; border-color: #bbb; background: #efefef; }
.pair .lit { border-color: #2a6f9e; background: linear-gradient(#d5edfa, #86c8ee); }
.icons { display: flex; gap: 15px; padding-top: 2px; }
.icons button, .tb-right button { width: 25px; height: 20px; flex: none; }
.icons svg, .tb-right svg { width: 16px; height: 16px; }
.sunk { border: solid #666; border-width: 1px 0 0 1px; background: #f7f7f7; }
.tb-bottom svg.x { width: 9px; height: 9px; }
.icons svg.x { margin-left: -14px; }
.tb-right { padding-top: 33px; }
.tb-right div { display: flex; height: 26px; gap: 1px; }
.tb-right button { height: 23px; }
.pointer { position: absolute; left: 210px; top: 672px; width: 8px; height: 11px; }
```
